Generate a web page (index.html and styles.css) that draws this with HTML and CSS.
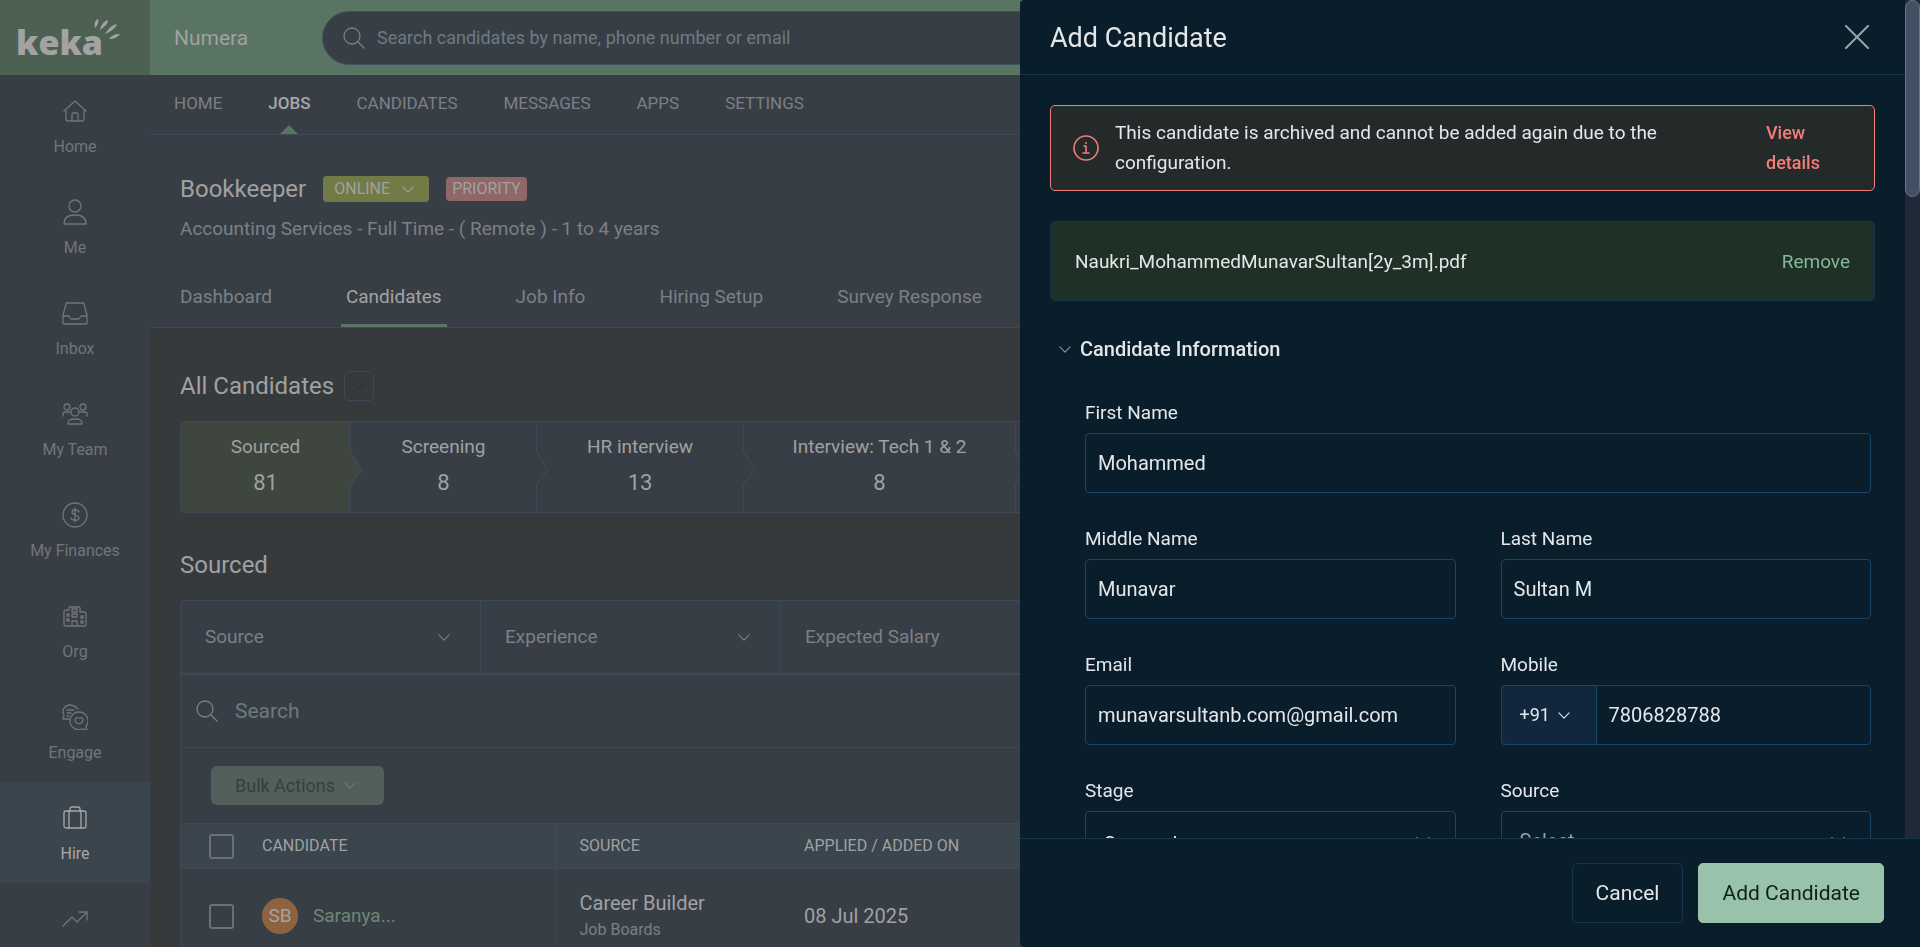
FILE: index.html
```html
<!DOCTYPE html>
<html lang="en">
<head>
    <meta charset="UTF-8">
    <meta name="viewport" content="width=device-width, initial-scale=1.0">
    <title>Keka Hire - Add Candidate</title>
    <link rel="stylesheet" href="styles.css">
</head>
<body>
    <!-- shared icon shapes -->
    <svg class="sprite" aria-hidden="true">
        <symbol id="chevron" viewBox="0 0 14 8"><path d="M1 1l6 6 6-6"/></symbol>
        <symbol id="search" viewBox="0 0 22 22"><circle cx="9" cy="9" r="8"/><path d="M15 15l6 6"/></symbol>
    </svg>

    <header class="topbar">
        <a class="logo" href="#">
            keka
            <svg width="28" height="24" viewBox="0 0 28 24">
                <path d="M1 10C0 6 1 2 4 1c1 3 0 6-3 9zM6 12c1-5 4-9 8-10 0 4-4 7-8 10zM11 16c3-5 7-9 12-10-2 5-7 8-12 10zM15 21c3-4 7-5 11-5-3 4-7 5-11 5z"/>
            </svg>
        </a>
        <span class="company">Numera</span>
        <label class="global-search">
            <svg class="icon" width="22" height="22"><use href="#search"/></svg>
            <input type="search" placeholder="Search candidates by name, phone number or email" aria-label="Search candidates">
        </label>
    </header>

    <div class="layout">
        <nav class="sidebar">
            <a href="#">
                <svg class="icon" width="26" height="26" viewBox="0 0 26 26"><path d="M2 13L13 3l11 10M4 12v9q0 2 2 2h14q2 0 2-2v-9M10 23v-7q0-1 1-1h4q1 0 1 1v7"/></svg>
                <span>Home</span>
            </a>
            <a href="#">
                <svg class="icon" width="26" height="26" viewBox="0 0 26 26"><circle cx="13" cy="7" r="6"/><path d="M2 25c0-6 4-9 11-9s11 3 11 9z"/></svg>
                <span>Me</span>
            </a>
            <a href="#">
                <svg class="icon" width="26" height="26" viewBox="0 0 26 26"><path d="M1 15L4 4q0-1 1-1h16q1 0 1 1l3 11v8q0 1-1 1H2q-1 0-1-1zM1 16h6l2 3h8l2-3h6"/></svg>
                <span>Inbox</span>
            </a>
            <a href="#">
                <svg class="icon" width="26" height="26" viewBox="0 0 26 26"><circle cx="5" cy="6" r="3"/><circle cx="21" cy="6" r="3"/><circle cx="13" cy="11" r="4"/><path d="M6 23c0-4 2-5 7-5s7 1 7 5zM1 15v-2q0-2 2-2h5M25 15v-2q0-2-2-2h-5"/></svg>
                <span>My Team</span>
            </a>
            <a href="#">
                <svg class="icon" width="26" height="26" viewBox="0 0 26 26"><circle cx="13" cy="13" r="12"/><path d="M17 10c-1-3-7-3-7 0 0 4 7 2 7 6 0 3-7 3-8 0M13 6v14"/></svg>
                <span>My Finances</span>
            </a>
            <a href="#">
                <svg class="icon" width="26" height="26" viewBox="0 0 26 26"><path d="M2 20V9q0-2 2-2h3V5q0-1 1-1h9q1 0 1 1v4h4q2 0 2 2v10q0 2-2 2H4q-2 0-2-2zM10 23v-5h5v5M10 6h5v3h-5zM10 11h5v3h-5zM5 11h2v2H5zM5 16h2v2H5zM19 13h2v2h-2zM19 18h2v2h-2z"/></svg>
                <span>Org</span>
            </a>
            <a href="#">
                <svg class="icon" width="26" height="26" viewBox="0 0 26 26"><path d="M7 15H1l1-4C-1 6 3 1 8 1c4 0 6 2 8 4M5 6h7M5 9h4M5 12h2M25 26l-5-1c-6 2-12-2-12-8s5-9 9-9 9 3 9 9c0 2-1 4-2 5zM17 20c-3-1-4-3-4-4 0-2 2-3 4-2 2-1 4 0 4 2 0 1-1 3-4 4z"/></svg>
                <span>Engage</span>
            </a>
            <a href="#" class="active">
                <svg class="icon" width="26" height="26" viewBox="0 0 26 26"><rect x="2" y="6" width="22" height="17" rx="2"/><path d="M8 6V4q0-2 2-2h6q2 0 2 2v2M7 6v17M19 6v17"/></svg>
                <span>Hire</span>
            </a>
            <a href="#" aria-label="Performance">
                <svg class="icon" width="26" height="26" viewBox="0 0 26 26"><path d="M1 20l9-9 5 5L25 6M17 6h8v8"/></svg>
            </a>
        </nav>

        <main class="content">
            <nav class="main-nav">
                <a href="#">HOME</a>
                <a href="#" class="active">JOBS</a>
                <a href="#">CANDIDATES</a>
                <a href="#">MESSAGES</a>
                <a href="#">APPS</a>
                <a href="#">SETTINGS</a>
            </nav>

            <section class="job-header">
                <div class="job-title">
                    <h1>Bookkeeper</h1>
                    <button class="badge online" type="button">ONLINE <svg class="icon" width="12" height="7"><use href="#chevron"/></svg></button>
                    <span class="badge priority">PRIORITY</span>
                </div>
                <p>Accounting Services - Full Time - ( Remote ) - 1 to 4 years</p>
                <nav class="job-tabs">
                    <a href="#">Dashboard</a>
                    <a href="#" class="active">Candidates</a>
                    <a href="#">Job Info</a>
                    <a href="#">Hiring Setup</a>
                    <a href="#">Survey Response</a>
                </nav>
            </section>

            <section class="candidates">
                <div class="all-candidates">
                    <h2>All Candidates</h2>
                    <button type="button" aria-label="Choose list"><svg class="icon" width="12" height="7"><use href="#chevron"/></svg></button>
                </div>

                <div class="pipeline">
                    <a href="#" class="stage active"><span>Sourced</span><b>81</b><svg class="arrow" viewBox="0 0 13 34"><path d="M0 0l12 19L0 34"/></svg></a>
                    <a href="#" class="stage"><span>Screening</span><b>8</b><svg class="arrow" viewBox="0 0 13 34"><path d="M0 0l12 19L0 34"/></svg></a>
                    <a href="#" class="stage"><span>HR interview</span><b>13</b><svg class="arrow" viewBox="0 0 13 34"><path d="M0 0l12 19L0 34"/></svg></a>
                    <a href="#" class="stage"><span>Interview: Tech 1 &amp; 2</span><b>8</b><svg class="arrow" viewBox="0 0 13 34"><path d="M0 0l12 19L0 34"/></svg></a>
                    <div class="stage"></div>
                </div>

                <h2>Sourced</h2>

                <div class="list">
                    <div class="filters">
                        <button type="button">Source <svg class="icon" width="12" height="7"><use href="#chevron"/></svg></button>
                        <button type="button">Experience <svg class="icon" width="12" height="7"><use href="#chevron"/></svg></button>
                        <button type="button">Expected Salary</button>
                    </div>
                    <label class="list-search">
                        <svg class="icon" width="22" height="22"><use href="#search"/></svg>
                        <input type="search" placeholder="Search" aria-label="Search list">
                    </label>
                    <div class="bulk">
                        <button type="button" disabled>Bulk Actions <svg class="icon" width="12" height="7"><use href="#chevron"/></svg></button>
                    </div>
                    <table>
                        <thead>
                            <tr>
                                <th class="check"><input type="checkbox" aria-label="Select all"></th>
                                <th class="name">CANDIDATE</th>
                                <th class="source">SOURCE</th>
                                <th>APPLIED / ADDED ON</th>
                            </tr>
                        </thead>
                        <tbody>
                            <tr>
                                <td class="check"><input type="checkbox" aria-label="Select Saranya"></td>
                                <td class="name"><div class="person"><span class="avatar">SB</span><a href="#">Saranya...</a></div></td>
                                <td class="source">Career Builder<small>Job Boards</small></td>
                                <td>08 Jul 2025</td>
                            </tr>
                        </tbody>
                    </table>
                </div>
            </section>
        </main>
    </div>

    <aside class="drawer" role="dialog" aria-labelledby="drawerTitle">
        <div class="drawer-scroll">
            <div class="drawer-header">
                <h2 id="drawerTitle">Add Candidate</h2>
                <button type="button" aria-label="Close"><svg class="icon" width="24" height="24" viewBox="0 0 24 24"><path d="M1 1l22 22M23 1L1 23"/></svg></button>
            </div>

            <div class="drawer-body">
                <div class="alert">
                    <svg class="icon" width="26" height="26" viewBox="0 0 26 26"><circle cx="13" cy="13" r="12"/><path d="M11 11h2v7M10 18h6"/><circle class="dot" cx="13" cy="8" r="1"/></svg>
                    <p>This candidate is archived and cannot be added again due to the configuration.</p>
                    <a href="#">View details</a>
                </div>

                <div class="file">
                    <span>Naukri_MohammedMunavarSultan[2y_3m].pdf</span>
                    <button type="button">Remove</button>
                </div>

                <h3><svg class="icon" width="12" height="7"><use href="#chevron"/></svg>Candidate Information</h3>

                <form class="form" id="candidateForm">
                    <div class="field wide">
                        <label for="firstName">First Name</label>
                        <input id="firstName" type="text" value="Mohammed">
                    </div>
                    <div class="field">
                        <label for="middleName">Middle Name</label>
                        <input id="middleName" type="text" value="Munavar">
                    </div>
                    <div class="field">
                        <label for="lastName">Last Name</label>
                        <input id="lastName" type="text" value="Sultan M">
                    </div>
                    <div class="field">
                        <label for="email">Email</label>
                        <input id="email" type="email" value="munavarsultanb.com@gmail.com">
                    </div>
                    <div class="field">
                        <label for="mobile">Mobile</label>
                        <div class="phone">
                            <button type="button">+91 <svg class="icon" width="12" height="7"><use href="#chevron"/></svg></button>
                            <input id="mobile" type="tel" value="7806828788">
                        </div>
                    </div>
                    <div class="field">
                        <label for="stage">Stage</label>
                        <div class="select">
                            <select id="stage"><option>Sourced</option></select>
                            <svg class="icon" width="14" height="8"><use href="#chevron"/></svg>
                        </div>
                    </div>
                    <div class="field">
                        <label for="source">Source</label>
                        <div class="select empty">
                            <select id="source"><option>Select</option></select>
                            <svg class="icon" width="14" height="8"><use href="#chevron"/></svg>
                        </div>
                    </div>
                </form>
            </div>
            <div class="scrollbar"><div class="thumb"></div></div>
        </div>

        <div class="drawer-footer">
            <button type="button" class="btn">Cancel</button>
            <button type="submit" form="candidateForm" class="btn primary">Add Candidate</button>
        </div>
    </aside>
</body>
</html>
```
FILE: styles.css
```css
* {
    box-sizing: border-box;
}

body {
    margin: 0;
    height: 100vh;
    overflow: hidden;
    display: flex;
    flex-direction: column;
    background-color: #373a3c;
    color: #a0a1a2;
    font-family: Roboto, sans-serif;
    font-size: 18px;
    line-height: 24px;
}

h1, h2, h3, p {
    margin: 0;
    font-weight: 400;
}

a {
    color: inherit;
    text-decoration: none;
}

button, input, select {
    margin: 0;
    font: inherit;
    color: inherit;
    background: none;
    border: none;
    outline: none;
}

button {
    cursor: pointer;
}

.sprite {
    position: absolute;
    width: 0;
    height: 0;
}

.icon {
    fill: none;
    stroke: currentColor;
    stroke-width: 1.3;
    stroke-linecap: round;
    stroke-linejoin: round;
    flex-shrink: 0;
}

/* top bar */
.topbar {
    display: flex;
    align-items: center;
    height: 75px;
    flex-shrink: 0;
    background-color: #597463;
}

.logo {
    position: relative;
    width: 150px;
    height: 75px;
    padding: 18px 0 0 16px;
    background-color: #4d6153;
    color: #a3a3a3;
    font-family: "Open Sans", sans-serif;
    font-size: 34px;
    font-weight: 800;
    line-height: 48px;
}

.logo svg {
    position: absolute;
    top: 18px;
    left: 94px;
    fill: currentColor;
}

.company {
    width: 172px;
    padding-left: 24px;
    font-size: 21px;
}

.global-search {
    flex: 1;
    display: flex;
    align-items: center;
    gap: 12px;
    height: 54px;
    padding-left: 20px;
    border: 1px solid #3d5465;
    border-radius: 27px;
    background-color: #383e45;
    color: #7b8085;
}

input[type="search"] {
    flex: 1;
    padding: 0;
    appearance: none;
}

input[type="search"]::placeholder {
    color: #6c7b82;
}

/* left menu */
.layout {
    flex: 1;
    display: flex;
    min-height: 0;
}

.sidebar {
    width: 150px;
    flex-shrink: 0;
    overflow: hidden;
    background-color: #383e45;
    color: #71757b;
    font-size: 16px;
}

.sidebar a {
    display: flex;
    flex-direction: column;
    align-items: center;
    gap: 11px;
    height: 101px;
    padding-top: 23px;
}

.sidebar a.active {
    background-color: #3b454e;
    color: #a8a8a8;
}

/* main page */
.content {
    flex: 1;
    min-width: 0;
    overflow: hidden;
}

.main-nav {
    display: flex;
    gap: 46px;
    height: 60px;
    padding-left: 24px;
    border-bottom: 1px solid #3b4a56;
    background-color: #383e45;
    color: #7b8085;
    font-size: 17px;
    line-height: 57px;
}

.main-nav a.active {
    position: relative;
    color: #a8a8a8;
    font-weight: 500;
}

.main-nav a.active::after {
    content: "";
    position: absolute;
    bottom: 0;
    left: 50%;
    margin-left: -9px;
    border: 9px solid transparent;
    border-top: none;
    border-bottom-color: #597463;
}

.job-header {
    padding: 38px 30px 0;
    background-color: #383e45;
    border-bottom: 1px solid #3b4a56;
}

.job-title {
    display: flex;
    align-items: center;
    gap: 17px;
}

h1, h2 {
    font-size: 24px;
    line-height: 32px;
}

.badge {
    display: flex;
    align-items: center;
    gap: 12px;
    height: 26px;
    padding: 0 15px 0 11px;
    border-radius: 4px;
    background-color: #727b45;
    font-size: 16px;
    line-height: 24px;
}

.badge.priority {
    height: 24px;
    padding: 0 6px;
    background-color: #8f6767;
}

.job-header p {
    margin-top: 12px;
    color: #7b8085;
    font-size: 19px;
}

.job-tabs {
    display: flex;
    gap: 64px;
    margin-top: 38px;
    margin-left: -5px;
    color: #7b8085;
    font-size: 19px;
}

.job-tabs a {
    height: 48px;
    padding: 6px 5px 0;
    border-bottom: 3px solid transparent;
}

.job-tabs a.active {
    color: #a3a3a3;
    border-bottom-color: #597463;
}

.candidates {
    padding: 42px 30px 0;
}

.all-candidates {
    display: flex;
    align-items: center;
    gap: 10px;
}

.all-candidates button {
    display: grid;
    place-items: center;
    width: 30px;
    height: 30px;
    padding: 0;
    border: 1px solid #3b4a56;
    border-radius: 5px;
    color: #2f3235;
}

.pipeline {
    display: grid;
    grid-template-columns: 170px 186px 207px 272px 1fr;
    height: 92px;
    margin: 19px 0 36px;
    border: 1px solid #3b4a56;
    border-radius: 5px;
    background-color: #383e45;
}

.stage {
    position: relative;
    display: flex;
    flex-direction: column;
    align-items: center;
    gap: 12px;
    padding-top: 13px;
    border-right: 1px solid #3b4a56;
    font-size: 19px;
}

.stage b {
    font-size: 22px;
    font-weight: 400;
}

.stage.active {
    background-color: #3e463f;
}

.arrow {
    position: absolute;
    top: 29px;
    right: -13px;
    z-index: 1;
    width: 13px;
    height: 34px;
    fill: #383e45;
    stroke: #4a4d53;
}

.stage.active .arrow {
    fill: #3e463f;
}

.list {
    margin-top: 19px;
    border: 1px solid #3b4a56;
    border-radius: 5px 5px 0 0;
    background-color: #383e45;
}

.filters {
    display: flex;
    height: 74px;
    border-bottom: 2px solid #3b4a56;
}

.filters button {
    display: flex;
    align-items: center;
    justify-content: space-between;
    width: 300px;
    padding: 0 30px 0 24px;
    border-right: 1px solid #3b4a56;
    color: #7b8085;
    font-size: 19px;
}

.filters button:last-child {
    flex: 1;
}

.list-search {
    display: flex;
    align-items: center;
    gap: 17px;
    height: 73px;
    padding-left: 15px;
    border-bottom: 1px solid #3b4a56;
    color: #7b8085;
    font-size: 21px;
}

.bulk {
    padding: 18px 30px;
}

.bulk button {
    display: flex;
    align-items: center;
    gap: 9px;
    height: 39px;
    padding: 0 28px 0 24px;
    border-radius: 6px;
    background-color: #535f5b;
    color: #383e3e;
}

.bulk .icon {
    color: #707674;
}

table {
    width: 100%;
    border-collapse: collapse;
    table-layout: fixed;
}

th, td {
    padding: 0 24px;
    text-align: left;
    font-weight: 400;
}

thead tr {
    height: 45px;
    border: solid #3b4a56;
    border-width: 1px 0;
    background-color: #3b454e;
    font-size: 16px;
}

tbody tr {
    height: 95px;
    font-size: 20px;
}

.check {
    width: 81px;
    padding: 0 0 0 28px;
}

.name {
    width: 293px;
    padding-left: 0;
    border-right: 1px solid #3b4a56;
}

.source {
    width: 225px;
}

.source small {
    display: block;
    margin-top: 3px;
    color: #7b8085;
    font-size: 16px;
}

input[type="checkbox"] {
    display: block;
    width: 25px;
    height: 25px;
    appearance: none;
    border: 2px solid #6c6f77;
    border-radius: 3px;
}

.person {
    display: flex;
    align-items: center;
    gap: 15px;
    color: #6f8576;
    font-size: 19px;
}

.avatar {
    width: 36px;
    height: 36px;
    border-radius: 50%;
    background-color: #8f623f;
    color: #a3a3a3;
    text-align: center;
    line-height: 36px;
}

/* drawer */
.drawer {
    position: fixed;
    top: 0;
    right: 0;
    bottom: 0;
    z-index: 10;
    width: 900px;
    max-width: 100%;
    display: flex;
    flex-direction: column;
    overflow: hidden;
    border-radius: 4px 0 0 4px;
    background-color: #0a1d2b;
    color: #e4e7e9;
    font-size: 19px;
}

.drawer-scroll {
    position: relative;
    flex: 1;
    min-height: 0;
    padding-right: 15px;
    overflow: hidden;
}

.scrollbar {
    position: absolute;
    top: 0;
    right: 0;
    bottom: 0;
    width: 15px;
    background-color: #1f2937;
}

.thumb {
    height: 197px;
    border: 1px solid #6b7280;
    border-radius: 8px;
    background-color: #435064;
}

.drawer-header {
    display: flex;
    align-items: center;
    justify-content: space-between;
    height: 75px;
    padding: 0 36px 0 30px;
    border-bottom: 1px solid #15344e;
}

.drawer-header h2 {
    padding-top: 2px;
    font-size: 27px;
}

.drawer-header button {
    display: flex;
    padding: 0;
    color: #9aa3ab;
}

.drawer-header .icon {
    stroke-width: 2;
}

.drawer-body {
    padding: 30px;
}

.alert {
    display: flex;
    align-items: center;
    padding: 12px 24px 12px 22px;
    border: 1px solid #f17e7a;
    border-radius: 5px;
    background-color: #242929;
    line-height: 30px;
}

.alert .icon {
    margin-right: 16px;
    color: #f17e7a;
    stroke-width: 1.6;
}

.alert .dot {
    fill: currentColor;
    stroke: none;
}

.alert p {
    flex: 1;
    padding-right: 60px;
}

.alert a {
    width: 84px;
    color: #f17e7a;
    font-size: 18px;
    font-weight: 500;
}

.file {
    display: flex;
    align-items: center;
    justify-content: space-between;
    height: 80px;
    margin-top: 30px;
    padding: 2px 24px 0;
    border: 1px solid #15344e;
    border-radius: 5px;
    background-color: #1f3026;
}

.file button {
    padding: 0;
    color: #86b899;
}

h3 {
    display: flex;
    align-items: center;
    gap: 9px;
    margin-top: 36px;
    padding-left: 9px;
    font-size: 20px;
    font-weight: 500;
}

h3 .icon {
    color: #8b959d;
}

.form {
    display: grid;
    grid-template-columns: 1fr 1fr;
    gap: 32px 45px;
    padding: 38px 4px 0 35px;
}

.field {
    min-width: 0;
}

.field.wide {
    grid-column: span 2;
}

.field label {
    display: block;
    margin-bottom: 6px;
    line-height: 28px;
}

.field input, .field select {
    width: 100%;
    height: 60px;
    padding: 0 12px;
    border: 1px solid #1a456b;
    border-radius: 4px;
    font-size: 20px;
}

.phone {
    display: flex;
}

.phone button {
    display: flex;
    align-items: center;
    gap: 8px;
    width: 95px;
    padding: 0 0 0 18px;
    border: 1px solid #1a456b;
    border-right: none;
    border-radius: 4px 0 0 4px;
    background-color: #11273d;
    font-size: 18px;
}

.phone input {
    flex: 1;
    width: auto;
    min-width: 0;
    border-radius: 0 4px 4px 0;
}

.select {
    position: relative;
}

.field select {
    padding: 6px 18px 0;
    appearance: none;
}

.field .empty select {
    padding-top: 0;
    color: #99a1a8;
}

.select .icon {
    position: absolute;
    top: 26px;
    right: 26px;
}

.drawer-footer {
    display: flex;
    justify-content: flex-end;
    gap: 15px;
    padding: 24px 36px;
    border-top: 1px solid #15344e;
}

.btn {
    height: 60px;
    padding: 0 23px;
    border: 1px solid #15344e;
    border-radius: 5px;
    font-size: 21px;
}

.btn.primary {
    border-color: #98c2a9;
    background-color: #98c2a9;
    color: #10201c;
}
```
